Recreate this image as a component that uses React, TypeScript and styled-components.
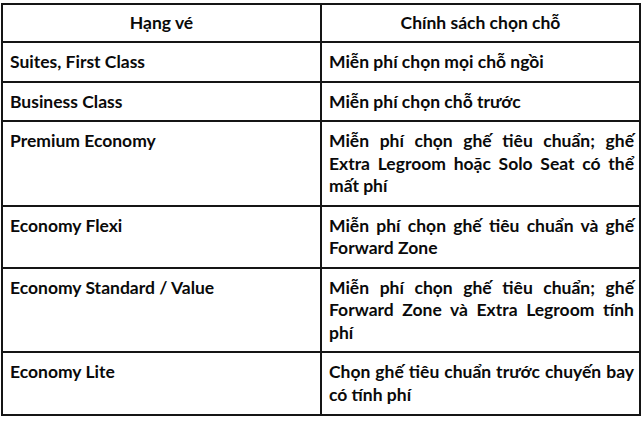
import styled, { createGlobalStyle } from "styled-components";

const GlobalStyle = createGlobalStyle`
  html, body {
    margin: 0;
    padding: 0;
    background: #ffffff;
  }
`;

const Page = styled.div`
  padding: 3px 0 0 1px;
  width: 642px;
  height: 423px;
  box-sizing: border-box;
  background: #ffffff;
`;

const Table = styled.table`
  border-collapse: collapse;
  width: 638px;
  table-layout: fixed;
  font-family: "Lato", "Liberation Sans", sans-serif;
  font-weight: 700;
  font-size: 17.5px;
  line-height: 22.5px;
  color: #0a0a0a;
`;

const HeadCell = styled.th`
  border: 2px solid #151515;
  height: 38px;
  padding: 0 8px;
  text-align: center;
  vertical-align: middle;
  font-weight: 700;
  box-sizing: border-box;
`;

const Cell = styled.td<{ $justify?: boolean; $last?: boolean }>`
  border: 2px solid #151515;
  padding: 8px 5px ${(p) => (p.$last ? "8px" : "7px")} 7px;
  vertical-align: top;
  text-align: ${(p) => (p.$justify ? "justify" : "left")};
  box-sizing: border-box;
`;

const rows: [string, string][] = [
  ["Suites, First Class", "Miễn phí chọn mọi chỗ ngồi"],
  ["Business Class", "Miễn phí chọn chỗ trước"],
  [
    "Premium Economy",
    "Miễn phí chọn ghế tiêu chuẩn; ghế Extra Legroom hoặc Solo Seat có thể mất phí",
  ],
  ["Economy Flexi", "Miễn phí chọn ghế tiêu chuẩn và ghế Forward Zone"],
  [
    "Economy Standard / Value",
    "Miễn phí chọn ghế tiêu chuẩn; ghế Forward Zone và Extra Legroom tính phí",
  ],
  ["Economy Lite", "Chọn ghế tiêu chuẩn trước chuyến bay có tính phí"],
];

export default function App() {
  return (
    <>
      <GlobalStyle />
      <Page>
        <Table>
          <colgroup>
            <col style={{ width: "319px" }} />
            <col style={{ width: "319px" }} />
          </colgroup>
          <thead>
            <tr>
              <HeadCell>Hạng vé</HeadCell>
              <HeadCell>Chính sách chọn chỗ</HeadCell>
            </tr>
          </thead>
          <tbody>
            {rows.map(([fare, policy], i) => {
              const last = i === rows.length - 1;
              return (
                <tr key={fare}>
                  <Cell $last={last}>{fare}</Cell>
                  <Cell $justify $last={last}>
                    {policy}
                  </Cell>
                </tr>
              );
            })}
          </tbody>
        </Table>
      </Page>
    </>
  );
}
